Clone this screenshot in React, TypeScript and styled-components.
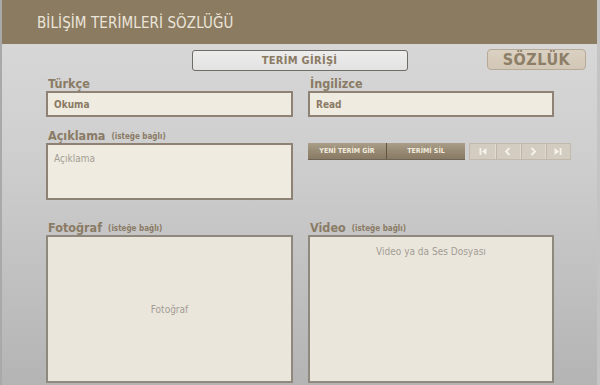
import React from "react";
import styled, { createGlobalStyle } from "styled-components";

const Global = createGlobalStyle`
  html, body { margin: 0; padding: 0; }
  body { font-family: "DejaVu Sans Condensed", "Liberation Sans", sans-serif; }
  * { box-sizing: border-box; }
`;

const Page = styled.div`
  width: 600px;
  height: 385px;
  overflow: hidden;
  background: linear-gradient(to bottom, #dadada 0px, #cfcfcf 150px, #b4b4b4 385px);
  border-left: 2px solid #a9a9a9;
  border-right: 3px solid #c4c4c4;
  display: flex;
  flex-direction: column;
`;

const Header = styled.header`
  height: 44px;
  margin-left: -2px;
  margin-right: -3px;
  background: #8b7b61;
  display: flex;
  align-items: center;
  padding-left: 37px;
  padding-top: 1px;
`;

const Title = styled.h1`
  margin: 0;
  font-family: "DejaVu Sans Condensed", "Liberation Sans", sans-serif;
  font-weight: normal;
  font-size: 15px;
  color: #ece6da;
  letter-spacing: 0.1px;
`;

const Toolbar = styled.div`
  display: grid;
  grid-template-columns: 1fr 216px 1fr;
  align-items: start;
  margin-top: 5px;
  height: 22px;
`;

const Tab = styled.div`
  grid-column: 2;
  height: 21px;
  margin-top: 1px;
  border: 1px solid #6f6b66;
  border-radius: 3px;
  background: linear-gradient(to bottom, #ededed, #e2e2e2);
  display: flex;
  align-items: center;
  justify-content: center;
  font-weight: bold;
  font-size: 11px;
  color: #8b7b64;
  letter-spacing: 0.3px;
`;

const DictButton = styled.div`
  grid-column: 3;
  justify-self: end;
  margin-right: 11px;
  width: 99px;
  height: 21px;
  border: 1px solid #b6a996;
  border-radius: 4px;
  background: linear-gradient(to bottom, #dbd1c2, #d2c7b6);
  display: flex;
  align-items: center;
  justify-content: center;
  font-weight: bold;
  font-size: 16px;
  color: #8d7e67;
  letter-spacing: 0.5px;
`;

const Form = styled.div`
  display: grid;
  grid-template-columns: 247px 246px;
  column-gap: 15px;
  padding-left: 44px;
  margin-top: 6px;
`;

const Field = styled.div<{ $top?: number }>`
  display: flex;
  flex-direction: column;
  margin-top: ${(p) => p.$top ?? 0}px;
`;

const Label = styled.div`
  height: 14px;
  display: flex;
  align-items: flex-end;
  gap: 6px;
  padding-left: 2px;
  font-weight: bold;
  font-size: 12.5px;
  line-height: 14px;
  color: #8a7b65;
  white-space: nowrap;
`;

const Optional = styled.span`
  font-size: 8px;
  line-height: 12px;
  font-weight: bold;
  color: #8a7b65;
`;

const TextBox = styled.div<{ $h: number }>`
  height: ${(p) => p.$h}px;
  border: 2px solid #8d8273;
  background: #efebe0;
  padding: 0 6px;
  font-size: 10px;
  font-weight: bold;
  color: #8a7a64;
  display: flex;
  align-items: center;
`;

const NoteBox = styled.div`
  height: 57px;
  border: 2px solid #8d8273;
  background: #efebe0;
  padding: 8px 6px;
  font-size: 10px;
  color: #a49e94;
`;

const MediaBox = styled.div<{ $align: "center" | "top" }>`
  height: 148px;
  border: 2px solid #8f887d;
  background: #ebe6dc;
  display: flex;
  justify-content: center;
  align-items: ${(p) => (p.$align === "center" ? "center" : "flex-start")};
  padding-top: ${(p) => (p.$align === "center" ? 0 : 9)}px;
  font-size: 10px;
  color: #a29d95;
`;

const ActionRow = styled.div`
  display: flex;
  gap: 4px;
  margin-top: 14px;
`;

const ActionGroup = styled.div`
  display: flex;
  flex-shrink: 0;
  width: 157px;
  height: 17px;
  background: linear-gradient(to bottom, #ab9e8a, #94866f 60%, #887a64);
  border-bottom: 1px solid #6f6556;
`;

const ActionButton = styled.div<{ $first?: boolean }>`
  flex: 1;
  display: flex;
  align-items: center;
  justify-content: center;
  font-size: 7px;
  font-weight: bold;
  color: #f1ebde;
  border-left: ${(p) => (p.$first ? "none" : "1px solid #5e5547")};
`;

const NavGroup = styled.div`
  display: flex;
  flex-shrink: 0;
  height: 17px;
  border: 1px solid #c2b9ac;
  background: #d3ccc1;
`;

const NavButton = styled.div<{ $first?: boolean }>`
  width: 25px;
  display: flex;
  align-items: center;
  justify-content: center;
  border-left: ${(p) => (p.$first ? "none" : "1px solid #e0dad1")};
  box-shadow: ${(p) => (p.$first ? "none" : "inset 1px 0 0 #bfb6a8")};
`;

const Icon = ({ kind }: { kind: "first" | "prev" | "next" | "last" }) => {
  const c = "#f6f2ec";
  return (
    <svg width="10" height="9" viewBox="0 0 10 9">
      {kind === "first" && (
        <>
          <rect x="1.5" y="1" width="1.8" height="7" fill={c} />
          <path d="M8.5 1 L4 4.5 L8.5 8 Z" fill={c} />
        </>
      )}
      {kind === "prev" && (
        <path d="M6.5 1 L3 4.5 L6.5 8" stroke={c} strokeWidth="1.8" fill="none" />
      )}
      {kind === "next" && (
        <path d="M3.5 1 L7 4.5 L3.5 8" stroke={c} strokeWidth="1.8" fill="none" />
      )}
      {kind === "last" && (
        <>
          <path d="M1.5 1 L6 4.5 L1.5 8 Z" fill={c} />
          <rect x="6.7" y="1" width="1.8" height="7" fill={c} />
        </>
      )}
    </svg>
  );
};

export default function App() {
  return (
    <>
      <Global />
      <Page>
        <Header>
          <Title>BİLİŞİM TERİMLERİ SÖZLÜĞÜ</Title>
        </Header>
        <Toolbar>
          <Tab>TERİM GİRİŞİ</Tab>
          <DictButton>SÖZLÜK</DictButton>
        </Toolbar>
        <Form>
          <Field>
            <Label>Türkçe</Label>
            <TextBox $h={26}>Okuma</TextBox>
          </Field>
          <Field>
            <Label>İngilizce</Label>
            <TextBox $h={26}>Read</TextBox>
          </Field>
          <Field $top={12}>
            <Label>
              Açıklama <Optional>(isteğe bağlı)</Optional>
            </Label>
            <NoteBox>Açıklama</NoteBox>
          </Field>
          <Field $top={12}>
            <ActionRow>
              <ActionGroup>
                <ActionButton $first>YENİ TERİM GİR</ActionButton>
                <ActionButton>TERİMİ SİL</ActionButton>
              </ActionGroup>
              <NavGroup>
                <NavButton $first>
                  <Icon kind="first" />
                </NavButton>
                <NavButton>
                  <Icon kind="prev" />
                </NavButton>
                <NavButton>
                  <Icon kind="next" />
                </NavButton>
                <NavButton>
                  <Icon kind="last" />
                </NavButton>
              </NavGroup>
            </ActionRow>
          </Field>
          <Field $top={21}>
            <Label>
              Fotoğraf <Optional>(isteğe bağlı)</Optional>
            </Label>
            <MediaBox $align="center">Fotoğraf</MediaBox>
          </Field>
          <Field $top={21}>
            <Label>
              Video <Optional>(isteğe bağlı)</Optional>
            </Label>
            <MediaBox $align="top">Video ya da Ses Dosyası</MediaBox>
          </Field>
        </Form>
      </Page>
    </>
  );
}
